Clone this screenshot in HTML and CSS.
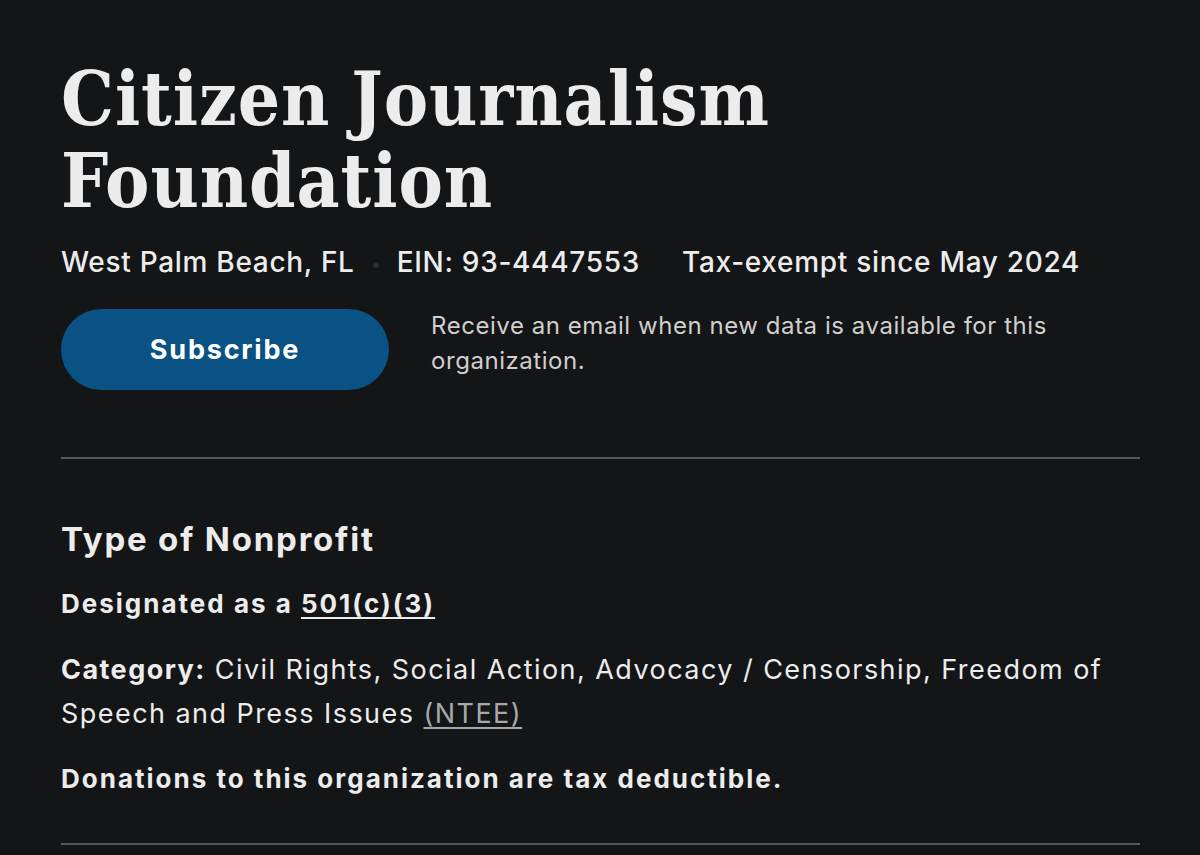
FILE: index.html
```html
<!DOCTYPE html>
<html lang="en">
<head>
<meta charset="utf-8">
<title>Citizen Journalism Foundation</title>
<link rel="stylesheet" href="styles.css">
</head>
<body>
<main class="page">
  <header class="org-header">
    <h1 class="org-title">Citizen Journalism<br>Foundation</h1>
    <p class="org-meta">
      <span>West Palm Beach, FL</span>
      <span class="sep"></span>
      <span>EIN: 93-4447553</span>
      <span class="sep sep-hidden"></span>
      <span>Tax-exempt since May 2024</span>
    </p>
    <div class="subscribe-row">
      <button class="subscribe-btn" type="button">Subscribe</button>
      <p class="subscribe-note">Receive an email when new data is available for this organization.</p>
    </div>
  </header>
  <hr class="rule rule-top">
  <section class="type-section">
    <h2 class="section-title">Type of Nonprofit</h2>
    <p class="designation">Designated as a <a href="#" class="link-strong">501(c)(3)</a></p>
    <p class="category"><strong>Category:</strong> Civil Rights, Social Action, Advocacy / Censorship, Freedom of Speech and Press Issues <a href="#" class="link-muted">(NTEE)</a></p>
    <p class="deductible">Donations to this organization are tax deductible.</p>
  </section>
  <hr class="rule">
</main>
</body>
</html>
```

FILE: styles.css
```css
html, body {
  margin: 0;
  padding: 0;
  background: #141516;
}

body {
  color: #ececec;
  font-family: "Inter", "Liberation Sans", sans-serif;
}

.page {
  padding: 58px 60px 0 61px;
  width: 1079px;
}

.org-title {
  margin: 0;
  font-family: "DejaVu Serif", "Liberation Serif", serif;
  font-stretch: condensed;
  font-weight: 700;
  font-size: 74px;
  line-height: 82px;
  letter-spacing: 0.9px;
  word-spacing: -3px;
  color: #ececec;
}

.org-meta {
  margin: 23px 0 0;
  display: flex;
  align-items: center;
  font-size: 28px;
  line-height: 34px;
  font-weight: 500;
  letter-spacing: 0.7px;
}

.sep {
  width: 6px;
  height: 6px;
  border-radius: 50%;
  background: #2b2c2d;
  margin: 6px 18px 0;
}

.sep-hidden {
  background: transparent;
  margin: 0 18px;
}

.subscribe-row {
  display: flex;
  align-items: flex-start;
  gap: 42px;
  margin-top: 30px;
}

.subscribe-btn {
  flex: 0 0 auto;
  width: 328px;
  height: 81px;
  border: none;
  border-radius: 41px;
  background: #0a5283;
  color: #ffffff;
  font-family: "Inter", "Liberation Sans", sans-serif;
  font-weight: 700;
  font-size: 27px;
  letter-spacing: 1.8px;
  cursor: pointer;
}

.subscribe-note {
  margin: -1px 0 0;
  max-width: 660px;
  font-size: 24px;
  line-height: 35px;
  color: #cfcfcf;
  letter-spacing: 0.55px;
}

.rule {
  margin: 0;
  border: none;
  height: 2px;
  background: #55575a;
}

.rule-top {
  margin-top: 67px;
}

.type-section {
  padding-top: 60px;
  padding-bottom: 47px;
}

.section-title {
  margin: 0;
  font-size: 33px;
  line-height: 40px;
  font-weight: 700;
  letter-spacing: 1.8px;
}

.designation {
  margin: 28px 0 0;
  font-size: 26px;
  line-height: 34px;
  font-weight: 700;
  letter-spacing: 2px;
}

.link-strong {
  color: #ececec;
  text-decoration: underline;
  text-underline-offset: 4px;
  text-decoration-thickness: 2px;
}

.category {
  margin: 27px 0 0;
  font-size: 27px;
  line-height: 44px;
  letter-spacing: 1.45px;
}

.category strong {
  font-weight: 700;
}

.link-muted {
  color: #a8a8a8;
  text-decoration: underline;
  text-underline-offset: 4px;
}

.deductible {
  margin: 26px 0 0;
  font-size: 26px;
  line-height: 34px;
  font-weight: 700;
  letter-spacing: 2px;
}
```
